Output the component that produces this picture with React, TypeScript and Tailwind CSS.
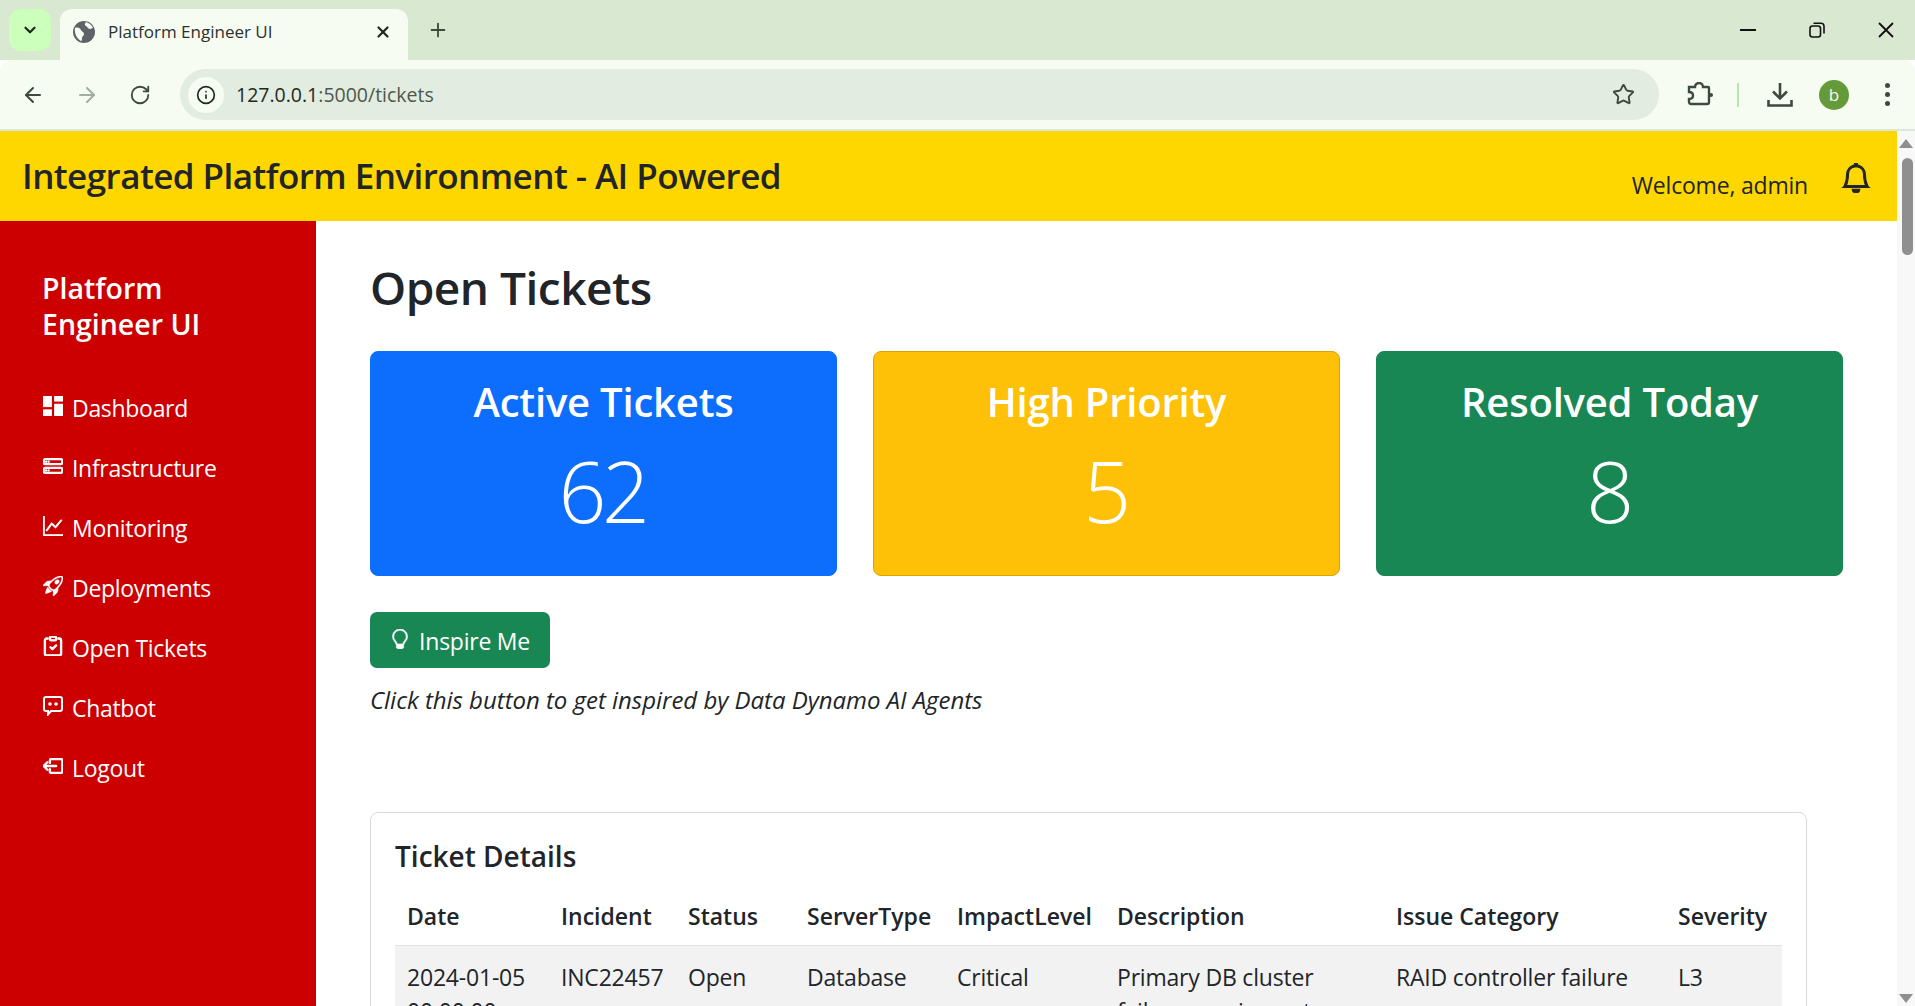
import React from "react";
import {
  BsHddStack,
  BsGraphUp,
  BsRocketTakeoff,
  BsClipboardCheck,
  BsBoxArrowLeft,
  BsBell,
  BsLightbulb,
} from "react-icons/bs";
import { ChevronDown, X, Plus, ArrowLeft, ArrowRight, RotateCw, Info, Star } from "lucide-react";

const DashIcon = ({ className }: { className?: string }) => (
  <svg viewBox="0 0 18 18" fill="currentColor" className={className}>
    <rect x="0" y="0" width="8" height="10" />
    <rect x="10" y="0" width="8" height="5" />
    <rect x="0" y="12" width="8" height="6" />
    <rect x="10" y="7" width="8" height="11" />
  </svg>
);

const ChatIcon = ({ className }: { className?: string }) => (
  <svg viewBox="0 0 20 20" fill="none" className={className}>
    <path stroke="currentColor" strokeWidth="2" d="M3 1h14a2 2 0 0 1 2 2v10a2 2 0 0 1-2 2H8l-3 3.500V15H3a2 2 0 0 1-2-2V3a2 2 0 0 1 2-2z" />
    <circle cx="7" cy="8" r="1.800" fill="currentColor" />
    <circle cx="13" cy="8" r="1.800" fill="currentColor" />
  </svg>
);

const navItems = [
  { label: "Dashboard", icon: DashIcon, iconClass: "" },
  { label: "Infrastructure", icon: BsHddStack, iconClass: "stroke-[0.9px]" },
  { label: "Monitoring", icon: BsGraphUp, iconClass: "stroke-[0.8px]" },
  { label: "Deployments", icon: BsRocketTakeoff, iconClass: "stroke-[0.3px]" },
  { label: "Open Tickets", icon: BsClipboardCheck, iconClass: "stroke-[0.9px]" },
  { label: "Chatbot", icon: ChatIcon, iconClass: "" },
  { label: "Logout", icon: BsBoxArrowLeft, iconClass: "stroke-[0.9px]" },
];

const BrowserChrome = () => {
  return (
    <div className="shrink-0 font-['Open_Sans',sans-serif]">
      <div className="flex h-[60px] items-end bg-[#d9e8d0] pl-[9px]">
        <div className="mb-[9px] flex h-[42px] w-[42px] items-center justify-center rounded-xl bg-[#ccffbc]">
          <ChevronDown size={18} strokeWidth={3} className="text-[#1e2a1c]" />
        </div>
        <div className="ml-[9px] flex h-[51px] w-[348px] items-center rounded-t-xl bg-[#f7fcf3] pb-[6px] pl-[13px] pr-[16px]">
          <svg viewBox="0 0 22 22" className="h-[22px] w-[22px]">
            <circle cx="11" cy="11" r="11" fill="#5f6368" />
            <path d="M2 7c3-1 5 0 6 2s3 2 3 4-2 2-2 4 0 3-1 3C4 18 1 12 2 7z" fill="#f7fcf3" />
            <path d="M13 1c3 1 6 3 7 6l-3 1c-2 0-2-2-4-3s-1-3 0-4z" fill="#f7fcf3" />
          </svg>
          <span className="ml-[13px] flex-1 text-[17px] text-[#2b322b]">Platform Engineer UI</span>
          <X size={18} strokeWidth={3} className="text-[#1e2a1c]" />
        </div>
        <div className="mb-[9px] ml-[19px] flex h-[42px] items-center">
          <Plus size={22} className="text-[#3d4a3c]" />
        </div>
        <div className="flex-1" />
        <div className="mb-[22px] flex items-center gap-[53px] pr-[21px] text-[#111]">
          <svg viewBox="0 0 16 16" className="h-[16px] w-[16px]" fill="none" stroke="currentColor" strokeWidth="2">
            <path d="M0 8h16" />
          </svg>
          <svg viewBox="0 0 16 16" className="h-[16px] w-[16px]" fill="none" stroke="currentColor" strokeWidth="1.6">
            <rect x="1" y="4" width="10.5" height="11" rx="2.5" />
            <path d="M4.500 1.200h7.500a3 3 0 0 1 3 3v7.300" />
          </svg>
          <svg viewBox="0 0 16 16" className="h-[16px] w-[16px]" fill="none" stroke="currentColor" strokeWidth="1.8">
            <path d="M1 1l14 14M15 1L1 15" />
          </svg>
        </div>
      </div>
      <div className="flex h-[69px] items-center rounded-t-xl bg-[#f7fcf3] pl-[21px]">
        <ArrowLeft size={24} className="text-[#3d4a3c]" />
        <ArrowRight size={24} className="ml-[30px] text-[#a3aca1]" />
        <RotateCw size={22} className="ml-[30px] text-[#3d4a3c]" />
        <div className="ml-[29px] flex h-[51px] w-[1479px] items-center rounded-full bg-[#e3ece0] pl-[8px] pr-[24px]">
          <div className="flex h-[36px] w-[36px] items-center justify-center rounded-full bg-[#f7fcf3]">
            <Info size={20} className="text-[#1e2a1c]" />
          </div>
          <span className="ml-[12px] flex-1 text-[19.5px] text-[#4d584c]">
            <span className="text-[#1e2a1c]">127.0.0.1</span>:5000/tickets
          </span>
          <Star size={23} className="text-[#3d4a3c]" />
        </div>
        <svg viewBox="0 0 26 26" fill="none" stroke="#3d4a3c" strokeWidth="2.4" className="ml-[28px] h-[26px] w-[26px]">
          <path d="M2 5h6a4 4 0 0 1 8 0h5a1 1 0 0 1 1 1v14a2 2 0 0 1-2 2H4a2 2 0 0 1-2-2v-3c3 0 4-1.500 4-3.500S5 10 2 10z" />
          <circle cx="24" cy="13" r="2" fill="#3d4a3c" stroke="none" />
        </svg>
        <div className="ml-[24px] h-[24px] w-[2px] bg-[#b9e6ad]" />
        <svg viewBox="0 0 26 26" fill="none" stroke="#3d4a3c" strokeWidth="2.600" className="ml-[28px] h-[26px] w-[26px]">
          <path d="M13 1v15M6 9.500l7 7 7-7" />
          <path d="M1.500 18v5.500h23V18" />
        </svg>
        <div className="ml-[26px] flex h-[30px] w-[30px] items-center justify-center rounded-full bg-[#659a3a] text-[17px] text-[#f7fcf3]">b</div>
        <div className="ml-[36px] flex flex-col gap-[4px]">
          <div className="h-[5px] w-[5px] rounded-full bg-[#3d4a3c]" />
          <div className="h-[5px] w-[5px] rounded-full bg-[#3d4a3c]" />
          <div className="h-[5px] w-[5px] rounded-full bg-[#3d4a3c]" />
        </div>
      </div>
      <div className="h-[2px] bg-[#dfe5da]" />
    </div>
  );
};

const StatCard = ({ title, value, color, border }: { title: string; value: string; color: string; border: string }) => {
  return (
    <div className={`flex h-[225px] w-[467px] flex-col items-center rounded-[8px] border pt-[26px] text-white ${color} ${border}`}>
      <h5 className="text-[40px] leading-[48px] font-semibold tracking-[-0.2px]">{title}</h5>
      <p className="mt-[17px] pr-[3px] text-[84px] leading-[96px] font-light tracking-[-4.5px]">{value}</p>
    </div>
  );
};

const App = () => {
  return (
    <div className="flex h-[1006px] w-[1915px] flex-col overflow-hidden bg-white font-['Open_Sans',sans-serif] text-[#212529]">
      <BrowserChrome />
      <div className="relative flex min-h-0 flex-1 flex-col pr-[18px]">
        <header className="flex h-[90px] shrink-0 items-center bg-[#ffd700] pl-[22px] pr-[26px]">
          <h1 className="mt-[1px] flex-1 text-[35px] font-semibold tracking-[-0.55px]">Integrated Platform Environment - AI Powered</h1>
          <span className="mt-[19px] text-[23px] tracking-[-0.2px]">Welcome, admin</span>
          <BsBell size={30} className="ml-[33px] mt-[3px] stroke-[0.6px] text-[#212529]" />
        </header>
        <div className="flex min-h-0 flex-1">
          <aside className="w-[316px] shrink-0 bg-[#cc0000] pl-[43px] pt-[49px] text-white">
            <h4 className="-ml-[1px] w-[200px] text-[28.5px] leading-[36px] font-semibold">Platform Engineer UI</h4>
            <nav className="mt-[48px] flex flex-col gap-[24px]">
              {navItems.map((item) => (
                <a key={item.label} className="flex h-[36px] items-center gap-[9px] text-[23px] tracking-[-0.3px]">
                  <item.icon className={`mb-[4px] h-[20px] w-[20px] ${item.iconClass}`} />
                  {item.label}
                </a>
              ))}
            </nav>
          </aside>
          <main className="min-w-0 flex-1 pl-[54px] pr-[54px] pt-[37px]">
            <h1 className="text-[46px] leading-[58px] font-semibold tracking-[-0.5px]">Open Tickets</h1>
            <div className="mt-[35px] flex justify-between">
              <StatCard title="Active Tickets" value="62" color="bg-[#0d6efd]" border="border-[#0d6efd]" />
              <StatCard title="High Priority" value="5" color="bg-[#ffc107]" border="border-[#d9a406]" />
              <StatCard title="Resolved Today" value="8" color="bg-[#198754]" border="border-[#198754]" />
            </div>
            <button className="mt-[36px] flex h-[56px] w-[180px] items-center justify-center gap-[9px] rounded-[7px] bg-[#198754] pt-[2px] text-[23px] tracking-[-0.25px] text-white">
              <BsLightbulb size={20} className="mb-[4px] stroke-[0.5px]" />
              Inspire Me
            </button>
            <p className="mt-[14px] text-[24px] leading-[36px] tracking-[-0.03px] italic">Click this button to get inspired by Data Dynamo AI Agents</p>
            <section className="mt-[94px] w-[1437px] rounded-t-[8px] border border-[#d9d9d9] px-[24px] pt-[25px]">
              <h5 className="text-[28px] leading-[36px] font-semibold">Ticket Details</h5>
              <table className="mt-[11px] w-full table-fixed text-left text-[23px] leading-[36px] tracking-[-0.2px]">
                <thead className="tracking-normal">
                  <tr className="border-b border-[#dee2e6]">
                    <th className="w-[154px] px-[12px] pb-[11px] pt-[13px] font-semibold">Date</th>
                    <th className="w-[127px] px-[12px] pb-[11px] pt-[13px] font-semibold">Incident</th>
                    <th className="w-[119px] px-[12px] pb-[11px] pt-[13px] font-semibold">Status</th>
                    <th className="w-[150px] px-[12px] pb-[11px] pt-[13px] font-semibold">ServerType</th>
                    <th className="w-[160px] px-[12px] pb-[11px] pt-[13px] font-semibold">ImpactLevel</th>
                    <th className="w-[279px] px-[12px] pb-[11px] pt-[13px] font-semibold">Description</th>
                    <th className="w-[282px] px-[12px] pb-[11px] pt-[13px] font-semibold">Issue Category</th>
                    <th className="px-[12px] pb-[11px] pt-[13px] font-semibold">Severity</th>
                  </tr>
                </thead>
                <tbody className="leading-[34px]">
                  <tr className="bg-[#f2f2f2] align-top">
                    <td className="px-[12px] py-[14px]">2024-01-05 00:00:00</td>
                    <td className="px-[12px] py-[14px]">INC22457</td>
                    <td className="px-[12px] py-[14px]">Open</td>
                    <td className="px-[12px] py-[14px]">Database</td>
                    <td className="px-[12px] py-[14px]">Critical</td>
                    <td className="px-[12px] py-[14px]">Primary DB cluster failure causing outage</td>
                    <td className="px-[12px] py-[14px]">RAID controller failure</td>
                    <td className="px-[12px] py-[14px]">L3</td>
                  </tr>
                </tbody>
              </table>
            </section>
          </main>
        </div>
        <div className="absolute bottom-0 right-0 top-0 w-[18px] bg-[#f8f8f8]">
          <div className="mx-auto mt-[8px] h-0 w-0 border-x-[7px] border-b-[9px] border-x-transparent border-b-[#8f8f8f]" />
          <div className="ml-[5px] mt-[10px] h-[97px] w-[11px] rounded-full bg-[#8f8f8f]" />
          <div className="absolute bottom-[3px] left-[2px] h-0 w-0 border-x-[7px] border-t-[9px] border-x-transparent border-t-[#8f8f8f]" />
        </div>
      </div>
    </div>
  );
};

export default App;
